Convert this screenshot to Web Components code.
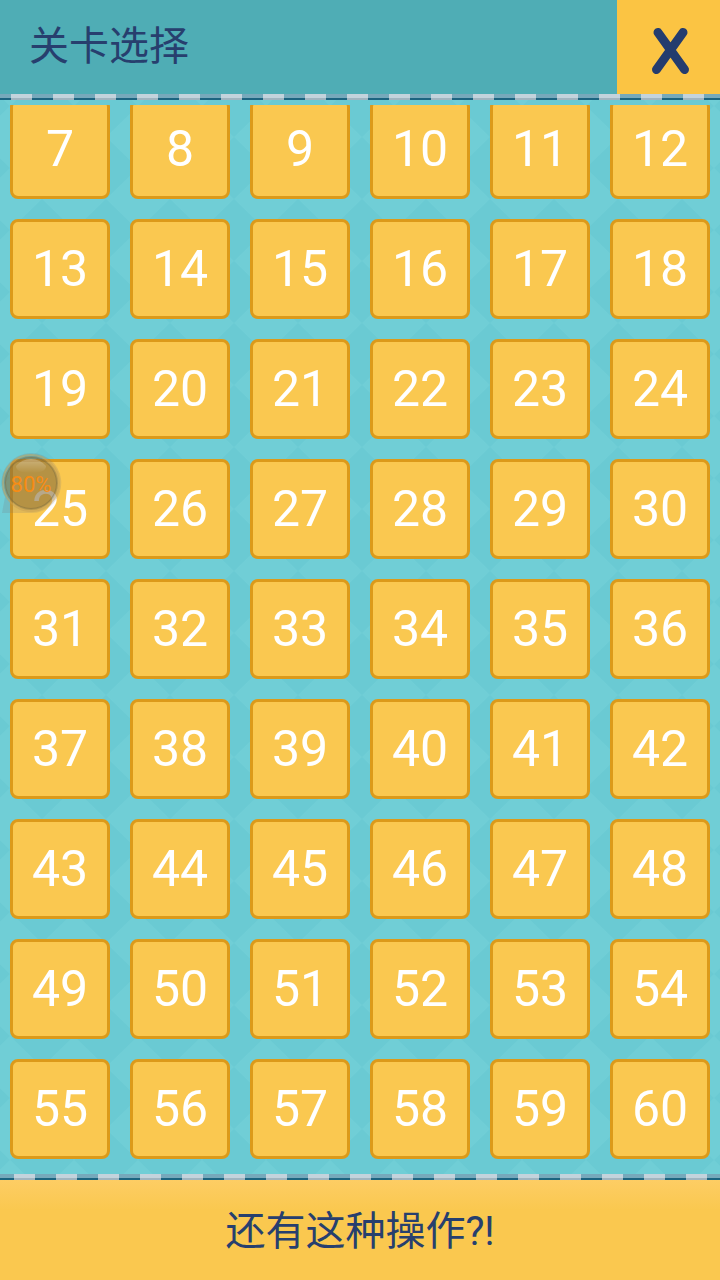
<!DOCTYPE html>
<html lang="zh-CN">
<head>
<meta charset="utf-8">
<meta name="viewport" content="width=device-width, initial-scale=1">
<title>关卡选择</title>
<style>
   body{
      margin:0;
      font-family:Roboto, "Noto Sans CJK SC", sans-serif;
      color:#273f6e;
   }
</style>
</head>
<body>
<level-screen>
   <screen-header slot='header'>关卡选择</screen-header>
   <level-grid first='7' last='60'></level-grid>
   <screen-footer slot='footer'>还有这种操作?!</screen-footer>
   <progress-bubble slot='overlay'>80%</progress-bubble>
</level-screen>

<script>
'use strict'
const makeTemplate = (html) => {
   const template = document.createElement('template')
   template.innerHTML = html
   return template
}

const screenHTML = makeTemplate(`
   <style>
      :host{
         display:flex;
         flex-direction:column;
         position:relative;
         height:100vh;
         overflow:hidden;
         background:#70ced6;
      }
      .backdrop{
         position:absolute;
         inset:0;
         width:100%;
         height:100%;
      }
      main{
         flex:1;
         min-height:0;
         display:flex;
         position:relative;
         padding-top:5px;
      }
   </style>
   <svg class='backdrop' aria-hidden='true'>
      <defs>
         <pattern id='argyle' x='10' y='13' width='64' height='62' patternUnits='userSpaceOnUse'>
            <path d='M32 0 64 31 32 62 0 31Z' fill='#6acad3'/>
         </pattern>
      </defs>
      <rect width='100%' height='100%' fill='url(#argyle)'/>
   </svg>
   <slot name='header'></slot>
   <main><slot></slot></main>
   <slot name='footer'></slot>
   <slot name='overlay'></slot>
`)
customElements.define('level-screen',
   class LevelScreen extends HTMLElement{
      constructor(){
         super()
         this.attachShadow({mode:'open'})
         this.shadowRoot.appendChild(screenHTML.content.cloneNode(true))
      }
   }
)

/* Dashed seam drawn between a bar and the board */
const seamHTML = makeTemplate(`
   <style>
      :host{
         display:block;
         height:6px;
         background:
            repeating-linear-gradient(90deg, #c3d3dc 0 21px, #76a9bb 21px 42px) var(--seam-start, 0) 0 / 42px 4px repeat-x,
            repeating-linear-gradient(90deg, #a0b5c0 0 21px, #1b6480 21px 42px) var(--seam-start, 0) 4px / 42px 2px repeat-x;
      }
   </style>
`)
customElements.define('stitch-seam',
   class StitchSeam extends HTMLElement{
      constructor(){
         super()
         this.attachShadow({mode:'open'})
         this.shadowRoot.appendChild(seamHTML.content.cloneNode(true))
      }
   }
)

const headerHTML = makeTemplate(`
   <style>
      :host{
         display:block;
         position:relative;
         --seam-start:11px;
      }
      header{
         display:flex;
         height:94px;
         background:#4fadb5;
      }
      h1{
         flex:1;
         margin:0;
         padding-left:29px;
         font-size:40px;
         font-weight:400;
         line-height:94px;
      }
      button{
         width:103px;
         padding:0;
         border:0;
         background:#fbc443;
         cursor:pointer;
      }
      svg{
         display:block;
      }
   </style>
   <header>
      <h1><slot></slot></h1>
      <button type='button' aria-label='关闭'>
         <svg width='103' height='94' viewBox='0 0 103 94' fill='none' stroke='#243c6e' stroke-width='9' stroke-linecap='round'>
            <path d='M41 32.500 67.500 69.500M66 32.500 39.500 69.500'/>
         </svg>
      </button>
   </header>
   <stitch-seam></stitch-seam>
`)
customElements.define('screen-header',
   class ScreenHeader extends HTMLElement{
      constructor(){
         super()
         this.attachShadow({mode:'open'})
         this.shadowRoot.appendChild(headerHTML.content.cloneNode(true))
      }
   }
)

const footerHTML = makeTemplate(`
   <style>
      :host{
         display:block;
         position:relative;
         --seam-start:14px;
      }
      button{
         display:block;
         box-sizing:border-box;
         width:100%;
         height:100px;
         padding:4px 0 0;
         border:0;
         background:linear-gradient(#fdcd64, #fac84f 30px);
         color:inherit;
         font:400 40px/96px Roboto, "Noto Sans CJK SC", sans-serif;
         cursor:pointer;
      }
   </style>
   <stitch-seam></stitch-seam>
   <button type='button'><slot></slot></button>
`)
customElements.define('screen-footer',
   class ScreenFooter extends HTMLElement{
      constructor(){
         super()
         this.attachShadow({mode:'open'})
         this.shadowRoot.appendChild(footerHTML.content.cloneNode(true))
      }
   }
)

const tileHTML = makeTemplate(`
   <style>
      :host{
         display:block;
         aspect-ratio:1;
      }
      button{
         box-sizing:border-box;
         width:100%;
         height:100%;
         padding:0;
         border:3px solid #dc9a1a;
         border-radius:8px;
         background:#fac850;
         color:#fff;
         font:400 50px/94px Roboto, sans-serif;
         cursor:pointer;
      }
   </style>
   <button type='button'><slot></slot></button>
`)
customElements.define('level-tile',
   class LevelTile extends HTMLElement{
      constructor(){
         super()
         this.attachShadow({mode:'open'})
         this.shadowRoot.appendChild(tileHTML.content.cloneNode(true))
      }
   }
)

const gridHTML = makeTemplate(`
   <style>
      :host{
         display:block;
         flex:1;
         overflow-y:auto;
         scrollbar-width:none;
      }
      .grid{
         display:grid;
         grid-template-columns:repeat(6, 1fr);
         gap:20px;
         padding:0 10px 20px;
      }
   </style>
   <div class='grid'></div>
`)
customElements.define('level-grid',
   class LevelGrid extends HTMLElement{
      constructor(){
         super()
         this.attachShadow({mode:'open'})
         this.shadowRoot.appendChild(gridHTML.content.cloneNode(true))
      }
      connectedCallback(){
         const grid = this.shadowRoot.querySelector('.grid')
         const last = Number(this.getAttribute('last'))
         grid.replaceChildren()
         for(let level = Number(this.getAttribute('first')); level <= last; level++){
            const tile = document.createElement('level-tile')
            tile.textContent = level
            grid.appendChild(tile)
         }
      }
   }
)

/* Floating bubble that lies over the board */
const bubbleHTML = makeTemplate(`
   <style>
      :host{
         display:block;
         position:absolute;
         left:0;
         top:452px;
         width:62px;
         height:62px;
         color:#f78c14;
         font-size:22px;
         line-height:66px;
         text-align:center;
         pointer-events:none;
      }
      svg{
         position:absolute;
         inset:0;
      }
      span{
         position:relative;
      }
   </style>
   <svg width='62' height='62' viewBox='0 0 62 62' aria-hidden='true'>
      <defs>
         <linearGradient id='shine' x1='0' y1='0' x2='0' y2='1'>
            <stop offset='0' stop-color='#fff' stop-opacity='.3'/>
            <stop offset='1' stop-color='#fff' stop-opacity='0'/>
         </linearGradient>
      </defs>
      <path d='M5 45 2 61H31A30 30 0 1 0 3 41Z' fill='#777' fill-opacity='.2'/>
      <circle cx='31' cy='31' r='28' fill='none' stroke='#c9a052' stroke-opacity='.5' stroke-width='2'/>
      <circle cx='31' cy='31' r='26' fill='#8a6c30' fill-opacity='.5' stroke='#7a6a40' stroke-opacity='.45' stroke-width='2'/>
      <path d='M16 14Q22 7 31 7T46 14Q46 21 31 21T16 14Z' fill='url(#shine)'/>
   </svg>
   <span><slot></slot></span>
`)
customElements.define('progress-bubble',
   class ProgressBubble extends HTMLElement{
      constructor(){
         super()
         this.attachShadow({mode:'open'})
         this.shadowRoot.appendChild(bubbleHTML.content.cloneNode(true))
      }
   }
);

(function(){
   // the board opens slightly scrolled, its first row tucked under the header
   document.querySelector('level-grid').scrollTop = 6
})()
</script>
</body>
</html>
